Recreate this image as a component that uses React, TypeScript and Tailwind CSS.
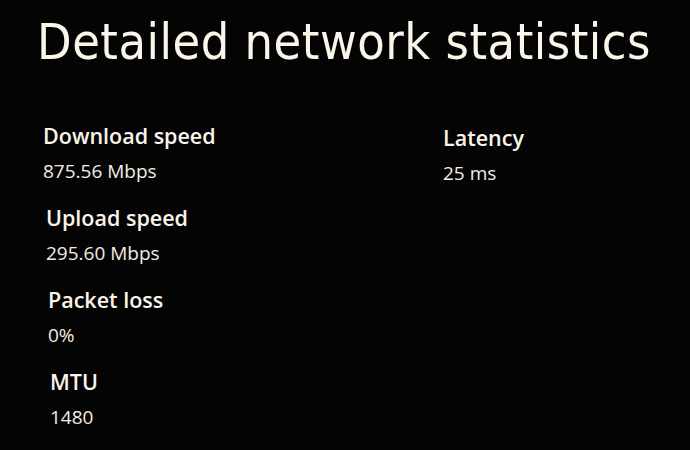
const stats = [
  { label: "Download speed", value: "875.56 Mbps", indent: "pl-0" },
  { label: "Upload speed", value: "295.60 Mbps", indent: "pl-[3px]" },
  { label: "Packet loss", value: "0%", indent: "pl-[5px]" },
  { label: "MTU", value: "1480", indent: "pl-[7px]" },
];

function Stat({ label, value, indent = "" }: { label: string; value: string; indent?: string }) {
  return (
    <div className={`flex flex-col ${indent}`}>
      <p className="text-[21.5px] font-semibold leading-[26px] text-[#fbf4ea]">{label}</p>
      <p className="mt-[10px] text-[19px] leading-[24px] text-[#f3ece2]">{value}</p>
    </div>
  );
}

export default function App() {
  return (
    <div
      className="h-[450px] w-[690px] overflow-hidden bg-[#040404] text-white"
      style={{ fontFamily: '"Open Sans", "Noto Sans", sans-serif' }}
    >
      <h1
        className="pl-[37px] pt-[10px] text-[50px] leading-[64px] tracking-[0.5px] text-[#fbf5ea]"
        style={{ fontFamily: '"DejaVu Sans Condensed", "DejaVu Sans", sans-serif' }}
      >
        Detailed network statistics
      </h1>
      <div className="mt-[49px] grid grid-cols-[400px_1fr] pl-[43px]">
        <div className="flex flex-col gap-[22px]">
          {stats.map((s) => (
            <Stat key={s.label} label={s.label} value={s.value} indent={s.indent} />
          ))}
        </div>
        <div className="flex flex-col pt-[2px]">
          <Stat label="Latency" value="25 ms" />
        </div>
      </div>
    </div>
  );
}
